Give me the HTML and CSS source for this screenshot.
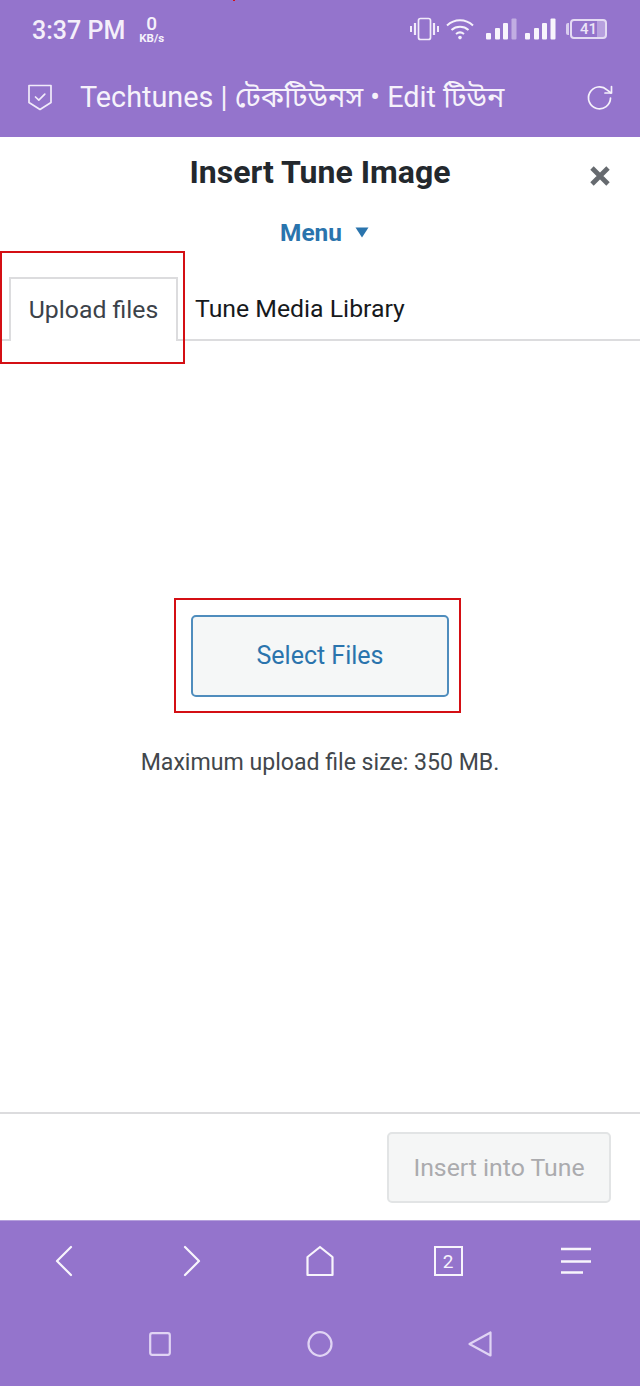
FILE: index.html
```html
<!DOCTYPE html>
<html lang="en">
<head>
<meta charset="utf-8">
<title>Insert Tune Image</title>
<link rel="stylesheet" href="styles.css">
</head>
<body>
<div class="phone">
  <header class="chrome">
    <span class="stray-mark"></span>
    <div class="status">
      <div class="status-left">
        <span class="clock">3:37 PM</span>
        <span class="speed"><span class="speed-num">0</span><span class="speed-unit">KB/s</span></span>
      </div>
      <div class="status-right">
        <svg class="ic-vib" width="29" height="24" viewBox="0 0 29 24" fill="none" stroke="#f1ebfa" stroke-width="1.7"><rect x="8.5" y="1.5" width="12" height="21" rx="2"/><path d="M5 6v12M24 6v12" stroke-width="2.2"/><path d="M1 9v6M28 9v6" stroke-width="2"/></svg>
        <svg class="ic-wifi" width="28" height="22" viewBox="0 0 28 22" fill="none" stroke="#f5f1fb" stroke-width="2"><path d="M1 7.5C8.5 .5 19.5 .5 27 7.5"/><path d="M5.5 12c4.8-4.2 12.2-4.2 17 0"/><path d="M10 16c2.5-2 5.5-2 8 0"/><circle cx="14" cy="19.6" r="1.8" fill="#f5f1fb" stroke="none"/></svg>
        <svg class="ic-sig ic-sig-first" width="31" height="22" viewBox="0 0 31 22" fill="#f8f5fc"><rect x="0" y="15" width="5" height="6.5" rx="1"/><rect x="9" y="10" width="5" height="11.5" rx="1"/><rect x="17" y="5" width="5" height="16.5" rx="1"/><rect x="25.5" y="0.5" width="5" height="21" rx="1" opacity=".45"/></svg>
        <svg class="ic-sig" width="31" height="22" viewBox="0 0 31 22" fill="#f8f5fc"><rect x="0" y="15" width="5" height="6.5" rx="1"/><rect x="9" y="10" width="5" height="11.5" rx="1"/><rect x="17" y="5" width="5" height="16.5" rx="1"/><rect x="25.5" y="0.5" width="5" height="21" rx="1"/></svg>
        <span class="battery"><span class="battery-cap"></span><span class="battery-body"><span class="battery-level">41</span></span></span>
      </div>
    </div>
    <div class="toolbar">
      <svg class="ic-shield" width="24" height="27" viewBox="0 0 24 27" fill="none" stroke="#f1ebfa" stroke-width="1.7" stroke-linejoin="round" stroke-linecap="round"><path d="M1 1.5h22v17L12 25.5 1 18.5z"/><path d="M7.5 13l3.3 3.2 6-6"/></svg>
      <span class="page-title">Techtunes | টেকটিউনস • Edit টিউন</span>
      <svg class="ic-reload" width="28" height="28" viewBox="0 0 28 28" fill="none" stroke="#f5f1fb" stroke-width="1.7" stroke-linecap="round" stroke-linejoin="round"><path d="M24.5 14a11 11 0 1 1-3.5-8.2L25 9"/><path d="M25.5 2.5V9h-6.5"/></svg>
    </div>
  </header>

  <main class="modal">
    <div class="modal-head">
      <h1 class="modal-title">Insert Tune Image</h1>
      <svg class="ic-close" width="22" height="22" viewBox="0 0 22 22" stroke="#666a6f" stroke-width="4.8"><path d="M3 3l16 16M19 3L3 19"/></svg>
    </div>
    <div class="menu-row">
      <span class="menu-link">Menu</span>
      <svg class="ic-caret" width="14" height="11" viewBox="0 0 14 11" fill="#2a74ad"><path d="M0.5 0.5h13L7 10.5z"/></svg>
    </div>
    <nav class="tabs">
      <span class="tab tab-active">Upload files</span>
      <span class="tab">Tune Media Library</span>
      <span class="mark mark-tab"></span>
    </nav>
    <section class="uploader">
      <div class="select-wrap">
        <button class="select-btn" type="button">Select Files</button>
        <span class="mark mark-btn"></span>
      </div>
      <p class="limit">Maximum upload file size: 350 MB.</p>
    </section>
    <footer class="modal-foot">
      <button class="insert-btn" type="button" disabled>Insert into Tune</button>
    </footer>
  </main>

  <footer class="bottom">
    <div class="browser-nav">
      <svg width="18" height="32" viewBox="0 0 18 32" fill="none" stroke="#f8f5fc" stroke-width="2.2" stroke-linecap="round" stroke-linejoin="round"><path d="M16 2L2 16l14 14"/></svg>
      <svg width="18" height="32" viewBox="0 0 18 32" fill="none" stroke="#f8f5fc" stroke-width="2.2" stroke-linecap="round" stroke-linejoin="round"><path d="M2 2l14 14L2 30"/></svg>
      <svg width="28" height="32" viewBox="0 0 28 32" fill="none" stroke="#f8f5fc" stroke-width="2.2" stroke-linejoin="round"><path d="M14 2l12.5 10v18H1.5V12z"/></svg>
      <span class="tab-count">2</span>
      <svg width="30" height="30" viewBox="0 0 30 30" stroke="#f8f5fc" stroke-width="2.6"><path d="M0 3h30M0 15.5h30M0 26.5h22"/></svg>
    </div>
    <div class="system-nav">
      <svg width="22" height="24" viewBox="0 0 22 24" fill="none" stroke="#e0d4f4" stroke-width="2.2"><rect x="1.2" y="1.2" width="19.6" height="21.6" rx="2"/></svg>
      <svg width="26" height="26" viewBox="0 0 26 26" fill="none" stroke="#e0d4f4" stroke-width="2.2"><ellipse cx="13" cy="13" rx="11.5" ry="11.8"/></svg>
      <svg width="24" height="26" viewBox="0 0 24 26" fill="none" stroke="#e0d4f4" stroke-width="2.2" stroke-linejoin="round"><path d="M22.5 1.5v23L1.5 13z"/></svg>
    </div>
  </footer>
</div>
</body>
</html>
```
FILE: styles.css
```css
* { box-sizing: border-box; }
html, body { margin: 0; padding: 0; background: #fff; }
body { font-family: Roboto, "Noto Sans", "Noto Sans Bengali", "Liberation Sans", sans-serif; }
.phone { width: 640px; height: 1386px; display: flex; flex-direction: column; overflow: hidden; }

.chrome { height: 137px; background: #9474cc; color: #f6f2fb; flex: none; position: relative; }
.stray-mark { position: absolute; left: 233px; top: 0; width: 2px; height: 1px; background: #d40f14; }
.status { height: 60px; padding: 0 33px 2px 32px; display: flex; justify-content: space-between; align-items: center; }
.status-left { display: flex; align-items: center; gap: 14px; }
.clock { font-size: 25px; font-weight: 500; color: #f4effa; margin-top: 2px; }
.speed { display: flex; flex-direction: column; align-items: center; margin-top: -1px; }
.speed-num { font-size: 19px; font-weight: 500; line-height: 19px; }
.speed-unit { font-size: 11.5px; font-weight: 700; line-height: 11px; }
.status-right { display: flex; align-items: center; gap: 8px; }
.ic-wifi { margin-left: -1px; }
.ic-sig-first { margin-left: 4px; }
.battery { display: flex; align-items: center; margin-left: 2px; }
.battery-cap { width: 3px; height: 12px; background: #d9cdef; border-radius: 2px 0 0 2px; }
.battery-body { width: 37px; height: 20px; margin-left: 1px; border: 2px solid #e4dbf3; border-radius: 4px; display: flex; align-items: center; justify-content: center; font-size: 15px; line-height: 1; font-weight: 500; color: #ece5f7; background: linear-gradient(90deg, transparent 75%, #b7a0de 75%); }

.toolbar { height: 77px; padding: 0 26px 3px 28px; display: flex; align-items: center; }
.page-title { font-size: 28.8px; margin: 5px 0 0 28px; flex: 1; color: #f6f2fb; white-space: nowrap; }
.ic-reload { margin-top: 2px; }

.modal { flex: 1; display: flex; flex-direction: column; background: #fff; min-height: 0; }
.modal-head { height: 70px; flex: none; display: flex; align-items: center; justify-content: center; position: relative; }
.modal-title { margin: 0; font-size: 32px; font-weight: 700; color: #23282d; }
.ic-close { position: absolute; right: 29px; top: 28px; }
.menu-row { height: 50px; flex: none; padding-left: 9px; display: flex; align-items: center; justify-content: center; gap: 13px; }
.menu-link { font-size: 24.4px; font-weight: 700; color: #2a74ad; }

.tabs { height: 84px; flex: none; padding: 20px 0 0 9px; display: flex; align-items: stretch; border-bottom: 2px solid #dcdcde; position: relative; }
.tab { padding: 1px 17px 0; display: flex; align-items: center; font-size: 24.8px; color: #16191c; }
.tab-active { width: 169px; padding: 0 0 2px; justify-content: center; color: #3c4249; background: #fff; border: 2px solid #dcdcde; border-bottom: 0; margin-bottom: -2px; }
.mark { position: absolute; border: 2px solid #d40f14; pointer-events: none; }
.mark-tab { left: 0; top: -6px; width: 185px; height: 113px; }

.uploader { flex: 1; display: flex; flex-direction: column; align-items: center; padding-top: 274px; }
.select-wrap { position: relative; display: flex; }
.select-btn { width: 258px; height: 82px; padding: 0 0 2px; background: #f5f7f7; border: 2px solid #4f8dbd; border-radius: 5px; font: inherit; font-size: 25px; color: #2a74ad; }
.mark-btn { left: -17px; top: -17px; width: 287px; height: 115px; }
.limit { margin: 52px 0 0; font-size: 23.1px; color: #42474c; }

.modal-foot { height: 108px; flex: none; border-top: 2px solid #dcdcde; padding: 18px 29px 0 0; display: flex; justify-content: flex-end; align-items: flex-start; }
.insert-btn { width: 224px; height: 71px; background: #f5f6f6; border: 2px solid #e2e4e5; border-radius: 5px; font: inherit; font-size: 24.8px; color: #ababae; }

.bottom { height: 166px; flex: none; background: #9474cc; border-top: 1px solid #b5a0dc; }
.browser-nav { height: 80px; display: grid; grid-template-columns: repeat(5, 1fr); align-items: center; justify-items: center; }
.tab-count { width: 29px; height: 30px; border: 2px solid #f8f5fc; display: flex; align-items: center; justify-content: center; font-size: 19px; color: #f8f5fc; }
.system-nav { height: 85px; padding: 0 80px; display: grid; grid-template-columns: repeat(3, 1fr); align-items: center; justify-items: center; }
```
